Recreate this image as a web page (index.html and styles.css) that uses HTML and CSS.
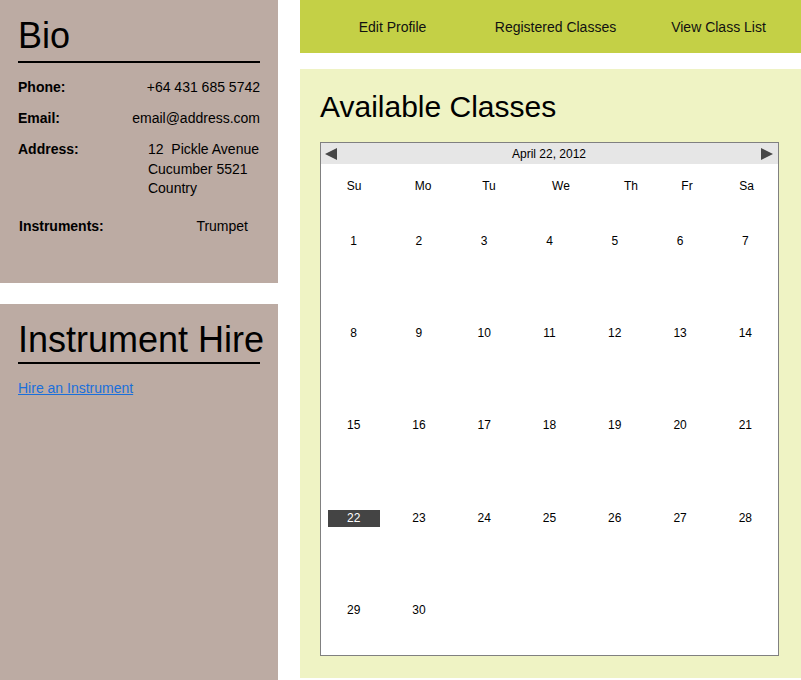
FILE: index.html
```html
<!DOCTYPE html>
<html lang="en">

<head>
  <meta charset="UTF-8">
  <meta name="viewport" content="width=device-width, initial-scale=1.0">
  <title>Student Profile</title>
  <link rel="stylesheet" href="styles.css">
</head>

<body>
  <div class="page">
    <aside class="sidebar">
      <section class="panel bio">
        <h1>Bio</h1>
        <div class="details">
          <span class="label">Phone:</span>
          <span class="value">+64 431 685 5742</span>
          <span class="label">Email:</span>
          <span class="value">email@address.com</span>
          <span class="label">Address:</span>
          <span class="value address">12&nbsp; Pickle Avenue<br>Cucumber 5521<br>Country</span>
        </div>
        <div class="details extra">
          <span class="label">Instruments:</span>
          <span class="value trumpet">Trumpet</span>
        </div>
      </section>
      <section class="panel hire">
        <h1>Instrument Hire</h1>
        <a href="#" class="hire-link">Hire an Instrument</a>
      </section>
    </aside>

    <main class="content">
      <nav class="topnav">
        <a href="#">Edit Profile</a>
        <a href="#">Registered Classes</a>
        <a href="#">View Class List</a>
      </nav>

      <section class="classes">
        <h2>Available Classes</h2>
        <div class="calendar">
          <div class="cal-head">
            <svg width="12" height="12" viewBox="0 0 12 12"><polygon points="12,0 12,12 0,6" fill="#474747" /></svg>
            <span>April 22, 2012</span>
            <svg width="12" height="12" viewBox="0 0 12 12"><polygon points="0,0 0,12 12,6" fill="#474747" /></svg>
          </div>
          <div class="weekdays">
            <span>Su</span><span>Mo</span><span>Tu</span><span>We</span><span>Th</span><span>Fr</span><span>Sa</span>
          </div>
          <div class="days" id="days"></div>
        </div>
      </section>
    </main>
  </div>

  <script>
    // April 2012 starts on a Sunday
    const days = document.getElementById('days');
    for (let i = 1; i <= 35; i++) {
      const cell = document.createElement('div');
      cell.className = 'day';
      if (i <= 30) {
        const num = document.createElement('span');
        num.textContent = i;
        if (i === 22) num.className = 'selected';
        cell.appendChild(num);
      }
      days.appendChild(cell);
    }
  </script>
</body>

</html>
```

FILE: styles.css
```css
body {
  margin: 0;
  font-family: "Liberation Sans", Arial, sans-serif;
  font-size: 14px;
  color: #000;
  background: #fff;
}

.page {
  display: flex;
  gap: 22px;
  height: 680px;
  overflow: hidden;
}

.sidebar {
  width: 278px;
  flex-shrink: 0;
  display: flex;
  flex-direction: column;
  gap: 21px;
}

.panel {
  background-color: #bcaba3;
  padding: 18px;
  box-sizing: border-box;
}

.panel h1 {
  margin: 0;
  font-size: 36px;
  font-weight: normal;
  line-height: 36px;
  white-space: nowrap;
  border-bottom: 2px solid #000;
}

.bio {
  height: 283px;
}

.bio h1 {
  padding-bottom: 7px;
}

.details {
  display: grid;
  grid-template-columns: auto 1fr;
  row-gap: 11.5px;
  margin-top: 15px;
  line-height: 19.5px;
}

.details .label {
  font-weight: bold;
}

.details .value {
  justify-self: end;
  text-align: left;
}

.details .address {
  margin-right: 1px;
}

.details.extra {
  margin-top: 18.5px;
  padding-left: 1px;
}

.details .trumpet {
  margin-right: 12px;
}

.hire {
  flex: 1;
}

.hire h1 {
  padding-bottom: 4px;
}

.hire-link {
  display: inline-block;
  margin-top: 15px;
  line-height: 19.5px;
  color: #1a6fdb;
}

.content {
  width: 501px;
  display: flex;
  flex-direction: column;
  gap: 16px;
}

.topnav {
  height: 53px;
  background-color: #c4d046;
  display: grid;
  grid-template-columns: repeat(3, 163px);
  justify-content: end;
  align-items: center;
  padding-right: 1px;
}

.topnav a {
  text-align: center;
  color: #111;
  text-decoration: none;
}

.classes {
  height: 609px;
  box-sizing: border-box;
  background-color: #eff3c4;
  padding: 20px 20px 22px 20px;
}

.classes h2 {
  margin: 0 0 17px;
  font-size: 30px;
  font-weight: normal;
  line-height: 36px;
}

.calendar {
  width: 459px;
  height: 514px;
  box-sizing: border-box;
  border: 1px solid #808080;
  background: #fff;
  display: flex;
  flex-direction: column;
  font-size: 12px;
}

.cal-head {
  height: 21px;
  background-color: #e6e6e6;
  display: flex;
  justify-content: space-between;
  align-items: center;
  padding: 0 5px 0 4px;
}

.weekdays {
  display: grid;
  grid-template-columns: 66px 72px 60px 84px 56px 56px 63px;
  height: 30px;
  box-sizing: border-box;
  padding-top: 14px;
  line-height: 16px;
  text-align: center;
}

.days {
  flex: 1;
  display: grid;
  grid-template-columns: repeat(7, 1fr);
  grid-template-rows: repeat(5, 1fr);
}

.day {
  display: flex;
  align-items: center;
  justify-content: center;
  padding-top: 3px;
}

.day span {
  display: inline-block;
  width: 52px;
  line-height: 17px;
  text-align: center;
}

.day span.selected {
  background-color: #444;
  color: #fff;
}
```
